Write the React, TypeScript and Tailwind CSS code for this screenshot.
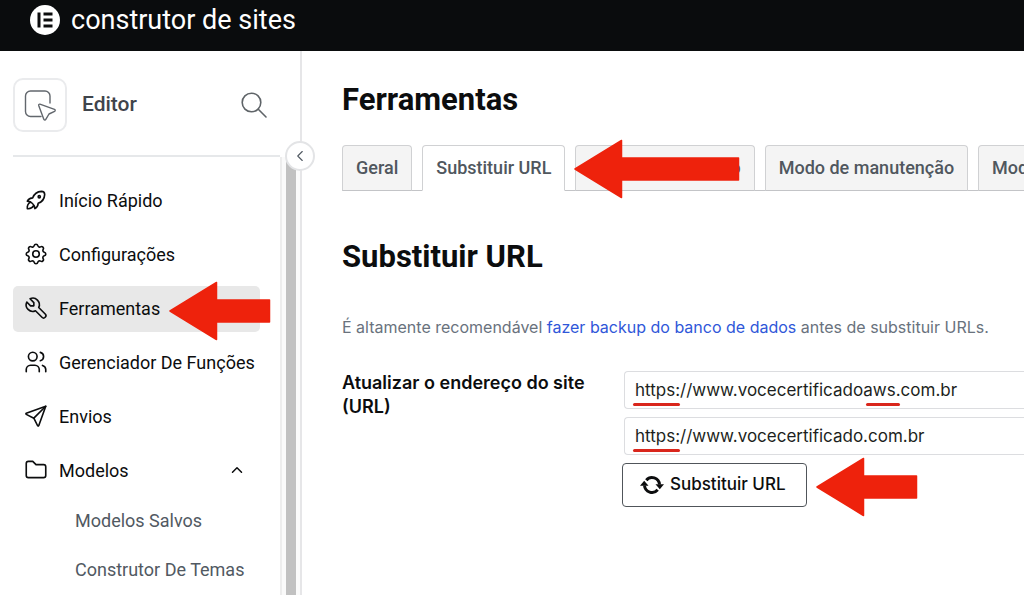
import type { ReactNode } from "react";
import type { IconType } from "react-icons";
import { TbFolder, TbRocket, TbSend, TbSettings, TbTool, TbUsers } from "react-icons/tb";
import { ChevronLeft, ChevronUp } from "lucide-react";

function ElementorLogo() {
  return (
    <svg viewBox="0 0 30 30" className="size-[30px] shrink-0" aria-hidden="true">
      <circle cx="15" cy="15" r="15" fill="#fff" />
      <g fill="#0c0d0e">
        <rect x="7.500" y="7.500" width="3" height="15" />
        <rect x="13.500" y="7.500" width="9" height="3" />
        <rect x="13.500" y="13.500" width="9" height="3" />
        <rect x="13.500" y="19.500" width="9" height="3" />
      </g>
    </svg>
  );
}

function EditorIcon() {
  return (
    <svg viewBox="0 0 32 32" className="size-8" fill="none" stroke="#62676d" strokeWidth="1.4" strokeLinejoin="round" strokeLinecap="round" aria-hidden="true">
      <path d="M26 14V7a5 5 0 0 0-5-5H6.500a5 5 0 0 0-5 5v15.500a5 5 0 0 0 5 5H17" />
      <path d="M15.900 15.200 30.500 20.300a1.100 1.100 0 0 1 .1 2L25 25l-3.200 5.400a1.100 1.100 0 0 1-2-.2L14.700 16.400a.95.95 0 0 1 1.200-1.200Z" fill="#fff" />
    </svg>
  );
}

function SearchIcon() {
  return (
    <svg viewBox="0 0 26 26" className="size-[26px]" fill="none" stroke="#5f6468" strokeWidth="1.600" strokeLinecap="round" aria-hidden="true">
      <circle cx="10.500" cy="10.500" r="9.300" />
      <path d="m17.300 17.300 7.700 7.700" />
    </svg>
  );
}

function SyncIcon() {
  return (
    <svg viewBox="0 0 24 20" className="h-5 w-6" fill="#0c0d0e" aria-hidden="true">
      <g fill="none" stroke="#0c0d0e" strokeWidth="3">
        <path d="M6.300 5.200A7.500 7.500 0 0 1 19.500 9.500" />
        <path d="M17.700 14.800A7.500 7.500 0 0 1 4.500 10.500" />
      </g>
      <path d="M15.500 9.200H24l-4.200 5Z" />
      <path d="M8.500 10.800H0l4.200-5Z" />
    </svg>
  );
}

function ArrowShort() {
  return (
    <svg viewBox="0 0 102 60" className="h-[60px] w-[102px]" aria-hidden="true">
      <path d="M1 30 47.500 1.500V19H100.500V41H47.500V58.500Z" fill="#ee220c" stroke="#ee220c" strokeWidth="1.500" strokeLinejoin="round" />
    </svg>
  );
}

function ArrowLong() {
  return (
    <svg viewBox="0 0 166 60" className="h-[60px] w-[166px]" aria-hidden="true">
      <path d="M1 30 47.500 1.500V19H164.500V41H47.500V58.500Z" fill="#ee220c" stroke="#ee220c" strokeWidth="1.500" strokeLinejoin="round" />
    </svg>
  );
}

type NavItemProps = { icon: IconType; label: string; active?: boolean; children?: ReactNode };

function NavItem({ icon: Icon, label, active, children }: NavItemProps) {
  return (
    <li className="relative">
      <a
        href="#"
        aria-current={active ? "page" : undefined}
        className={`flex h-[46px] items-center gap-[10px] rounded-[5px] pb-0.5 pl-[10px] text-[18px] text-[#0c0d0e] ${active ? "bg-[#e8e8e8]" : ""}`}
      >
        <Icon size={26} strokeWidth={1.5} className="shrink-0" aria-hidden="true" />
        <span className="whitespace-nowrap">{label}</span>
      </a>
      {children}
    </li>
  );
}

function Sidebar() {
  return (
    <aside className="relative w-[302px] shrink-0 border-r-2 border-[#e6e6e8]">
      <div className="mr-5 ml-[13px] flex h-[106px] items-center gap-[15px] border-b-2 border-[#e6e8ea] pt-1">
        <span className="flex size-[54px] shrink-0 items-center justify-center rounded-[10px] border-2 border-[#eaebed]">
          <EditorIcon />
        </span>
        <span className="flex-1 text-[21px] font-medium text-[#3f444b]">Editor</span>
        <button type="button" aria-label="Buscar" className="mr-[13px]">
          <SearchIcon />
        </button>
      </div>

      <button
        type="button"
        aria-label="Recolher menu"
        className="absolute top-[90px] -right-[15px] z-10 flex size-[30px] items-center justify-center rounded-full border-2 border-[#e3e4e6] bg-white text-[#515962]"
      >
        <ChevronLeft size={18} strokeWidth={1.5} />
      </button>

      <div className="flex">
        <nav className="flex-1 pt-[21px] pr-5 pl-[13px]" aria-label="Editor">
          <ul className="flex flex-col gap-2">
            <NavItem icon={TbRocket} label="Início Rápido" />
            <NavItem icon={TbSettings} label="Configurações" />
            <NavItem icon={TbTool} label="Ferramentas" active>
              <span className="pointer-events-none absolute top-[-5px] left-[156px]">
                <ArrowShort />
              </span>
            </NavItem>
            <NavItem icon={TbUsers} label="Gerenciador De Funções" />
            <NavItem icon={TbSend} label="Envios" />
            <li>
              <button type="button" aria-expanded="true" className="flex h-[46px] w-full items-center gap-[10px] pr-[14px] pb-0.5 pl-[10px] text-[18px] text-[#0c0d0e]">
                <TbFolder size={26} strokeWidth={1.5} aria-hidden="true" />
                <span className="flex-1 text-left">Modelos</span>
                <ChevronUp size={18} strokeWidth={2} aria-hidden="true" />
              </button>
              <ul className="pt-1 pl-[62px] text-[18px] text-[#515962]">
                <li>
                  <a href="#" className="flex h-[49px] items-center pb-1 whitespace-nowrap">Modelos Salvos</a>
                </li>
                <li>
                  <a href="#" className="flex h-[49px] items-center pb-1 whitespace-nowrap">Construtor De Temas</a>
                </li>
              </ul>
            </li>
          </ul>
        </nav>
        <div className="flex w-5 justify-center border-l-2 border-[#ededed] bg-[#fafafa]" aria-hidden="true">
          <span className="w-[10px] bg-[#c1c1c1]" />
        </div>
      </div>
    </aside>
  );
}

const tabs = [
  { label: "Geral" },
  { label: "Substituir URL", active: true },
  { label: "Controle de versão" },
  { label: "Modo de manutenção" },
  { label: "Modelos" },
];

function Tabs() {
  return (
    <div className="relative mt-[27px]">
      <div role="tablist" className="flex gap-[10px] border-b border-[#c3c4c7] text-[18px] font-medium text-[#50575e]">
        {tabs.map((tab) => (
          <button
            key={tab.label}
            type="button"
            role="tab"
            aria-selected={!!tab.active}
            className={`-mb-px flex h-[46px] shrink-0 items-center rounded-t-[4px] border border-[#d0d1d3] px-[13px] pb-0.5 whitespace-nowrap ${tab.active ? "border-b-white bg-white" : "border-b-[#c3c4c7] bg-[#f4f4f4]"}`}
          >
            {tab.label}
          </button>
        ))}
      </div>
      <span className="pointer-events-none absolute top-[-6px] left-[232px]">
        <ArrowLong />
      </span>
    </div>
  );
}

const inputClass =
  "block h-[38px] w-full rounded-l-[4px] border border-r-0 border-[#dcdde0] bg-white pl-[10px] font-[Inter,sans-serif] text-[17px] text-[#1d1f21] outline-none";
const underline = "pointer-events-none absolute top-8 h-[3px] rounded-full bg-[#d9261c]";

export default function App() {
  return (
    <div className="flex min-h-screen flex-col overflow-hidden bg-white font-[Roboto,sans-serif]">
      <header className="flex h-[51px] items-center gap-[11px] bg-[#0a0c0d] pb-[11px] pl-[30px] text-[27px] text-white">
        <ElementorLogo />
        <span>construtor de sites</span>
      </header>

      <div className="flex flex-1">
        <Sidebar />

        <main className="min-w-0 flex-1 overflow-hidden pt-[31px] pl-10">
          <h1 className="text-[31px] leading-9 font-bold text-[#0c0d0e]">Ferramentas</h1>
          <Tabs />

          <h2 className="mt-12 text-[31px] leading-9 font-bold text-[#0c0d0e]">Substituir URL</h2>
          <p className="mt-10 font-[Inter,sans-serif] text-[16px] leading-6 text-[#69727d]">
            É altamente recomendável{" "}
            <a href="#" className="text-[#2f57d9]">fazer backup do banco de dados</a>{" "}
            antes de substituir URLs.
          </p>

          <div className="mt-8 flex font-[Inter,sans-serif]">
            <label htmlFor="old-url" className="w-[280px] shrink-0 pr-8 text-[18px] leading-6 font-semibold text-[#0c0d0e]">
              Atualizar o endereço do site (URL)
            </label>
            <div className="flex min-w-0 flex-1 flex-col gap-2">
              <div className="relative ml-0.5">
                <input id="old-url" type="text" defaultValue="https://www.vocecertificadoaws.com.br" className={inputClass} />
                <span className={`${underline} left-[9px] w-[47px]`} />
                <span className={`${underline} left-[242px] w-[34px]`} />
              </div>
              <div className="relative ml-0.5">
                <input type="text" aria-label="Novo endereço do site" defaultValue="https://www.vocecertificado.com.br" className={inputClass} />
                <span className={`${underline} left-[9px] w-[47px]`} />
              </div>
              <div className="relative">
                <button type="button" className="flex h-11 items-center gap-1.5 rounded-[4px] border border-[#50555a] bg-white pr-5 pl-[17px] text-[17px] font-medium text-[#0c0d0e]">
                  <SyncIcon />
                  Substituir URL
                </button>
                <span className="pointer-events-none absolute top-[-6px] left-[194px]">
                  <ArrowShort />
                </span>
              </div>
            </div>
          </div>
        </main>
      </div>
    </div>
  );
}
